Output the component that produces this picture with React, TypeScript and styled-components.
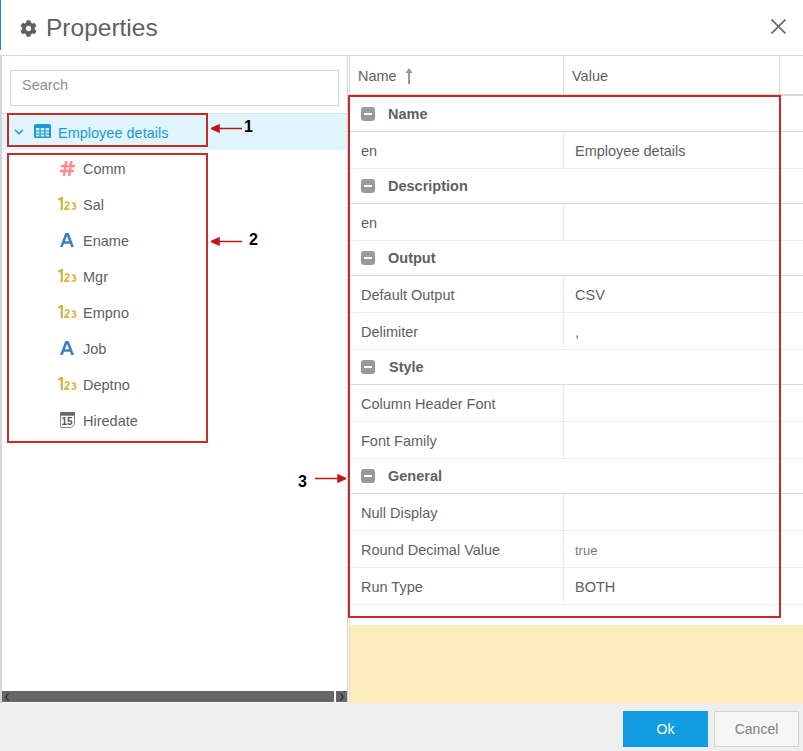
import { type FC } from 'react';
import styled, { createGlobalStyle } from 'styled-components';
import { FaCog } from 'react-icons/fa';

const FONT = '"Liberation Sans", Arial, sans-serif';

const Global = createGlobalStyle`
  html, body, #root { margin: 0; height: 100%; }
  body { background: #fff; font-family: ${FONT}; color: #555; overflow: hidden; }
  * { box-sizing: border-box; }
`;

const Dialog = styled.div`
  position: relative;
  width: 803px;
  height: 751px;
  display: flex;
  flex-direction: column;
  background: #fff;
`;

const Header = styled.header`
  position: relative;
  height: 56px;
  flex: none;
  display: flex;
  align-items: center;
  gap: 9px;
  padding: 1px 17px 0 20px;
  border-bottom: 1px solid #d9d9d9;

  &::before {
    content: '';
    position: absolute;
    left: 0;
    top: 0;
    width: 1px;
    height: 50px;
    background: #0e8cc8;
  }
`;

const Title = styled.h1`
  margin: 0;
  flex: 1;
  font-size: 24.5px;
  font-weight: 400;
  color: #5f5f5f;
`;

const CloseButton = styled.button`
  width: 15px;
  height: 15px;
  margin-top: -3px;
  padding: 0;
  border: 0;
  background: none;
  display: flex;
`;

const Body = styled.div`
  flex: 1;
  display: flex;
  min-height: 0;
`;

const LeftPane = styled.aside`
  width: 348px;
  margin-right: 1px;
  flex: none;
  display: flex;
  flex-direction: column;
  border-left: 2px solid #d4d4d4;
  border-right: 1px solid #d4d4d4;
`;

const SearchWrap = styled.div`
  padding: 14px 0 7px 8px;
`;

const SearchInput = styled.input`
  display: block;
  width: 329px;
  height: 36px;
  padding: 0 11px 7px;
  border: 1px solid #d5d5d5;
  font: 14.5px ${FONT};
  &::placeholder { color: #8f8f8f; opacity: 1; }
`;

const Tree = styled.div`
  flex: 1;
`;

const RootRow = styled.div`
  height: 37px;
  display: flex;
  align-items: center;
  padding-left: 12px;
  background: #e1f5fe;
  border-top: 1px solid #d5e3ea;
  color: #1b9ad6;
  font-size: 14.5px;
`;

const RootLabel = styled.span`
  margin-left: 7px;
  padding-top: 2px;
`;

const FieldRow = styled.div`
  height: 36px;
  display: flex;
  align-items: center;
  font-size: 14.5px;
  color: #5f5f5f;
`;

const FieldName = styled.span`
  padding-top: 2px;
`;

const FieldIcon = styled.span`
  width: 32px;
  height: 20px;
  margin-left: 49px;
  flex: none;
  display: flex;
  align-items: center;
  justify-content: center;
`;

const Scrollbar = styled.div`
  height: 11px;
  margin-bottom: 1px;
  display: flex;
  gap: 2px;
`;

const ScrollTrack = styled.div`
  flex: 1;
  display: flex;
  align-items: center;
  padding-left: 3px;
  background: #666;
`;

const ScrollEnd = styled.div`
  width: 11px;
  display: flex;
  align-items: center;
  justify-content: center;
  background: #666;
`;

const RightPane = styled.section`
  flex: 1;
  display: flex;
  flex-direction: column;
  border-left: 1px solid #dcdcdc;
`;

const TableHead = styled.div`
  height: 40px;
  flex: none;
  margin-bottom: 1px;
  display: flex;
  border-bottom: 2px solid #d9d9d9;
  font-size: 14.5px;
  color: #5f5f5f;
`;

const HeadCell = styled.div<{ $width: number }>`
  width: ${p => p.$width}px;
  display: flex;
  align-items: center;
  gap: 8px;
  padding: 1px 0 0 8px;
  border-right: 1px solid #d9d9d9;
`;

const GroupRow = styled.div`
  height: 35px;
  display: flex;
  align-items: center;
  padding-left: 11px;
  border-bottom: 1px solid #d9d9d9;
  font-size: 14.5px;
  font-weight: 700;
  color: #5f5f5f;
`;

const GroupLabel = styled.span<{ $offset: number }>`
  margin-left: ${p => p.$offset}px;
`;

const Minus = styled.span`
  width: 14px;
  height: 14px;
  flex: none;
  display: flex;
  align-items: center;
  justify-content: center;
  border-radius: 3px;
  background: #999;
  &::after {
    content: '';
    width: 8px;
    height: 2px;
    background: #fff;
  }
`;

const Row = styled.div`
  height: 37px;
  display: flex;
  border-bottom: 1px solid #ececec;
`;

const NameCell = styled.div`
  width: 213px;
  display: flex;
  align-items: center;
  padding: 2px 0 0 11px;
  font-size: 14.5px;
  color: #5f5f5f;
`;

const ValueCell = styled.div<{ $muted?: boolean }>`
  width: 216px;
  display: flex;
  align-items: center;
  padding: 2px 0 0 11px;
  border-left: 1px solid #ececec;
  font-size: ${p => (p.$muted ? '13px' : '14.5px')};
  color: ${p => (p.$muted ? '#7a7a7a' : '#5f5f5f')};
`;

const Notice = styled.div`
  flex: 1;
  margin-top: 20px;
  background: #feeebd;
`;

const Footer = styled.footer`
  height: 48px;
  flex: none;
  display: flex;
  justify-content: flex-end;
  align-items: flex-start;
  gap: 6px;
  padding: 8px 4px 0 0;
  background: #eee;
`;

const Button = styled.button<{ $primary?: boolean }>`
  width: 85px;
  height: 36px;
  font: 14px ${FONT};
  border: ${p => (p.$primary ? '0' : '1px solid #d2d2d2')};
  background: ${p => (p.$primary ? '#129de0' : '#f6f6f6')};
  color: ${p => (p.$primary ? '#fff' : '#808080')};
`;

/* red markup drawn over the screenshot */
const MarkBox = styled.div<{ $x: number; $y: number; $w: number; $h: number }>`
  position: absolute;
  left: ${p => p.$x}px;
  top: ${p => p.$y}px;
  width: ${p => p.$w}px;
  height: ${p => p.$h}px;
  border: 2px solid #c82a2a;
  pointer-events: none;
`;

const MarkArrow = styled.svg<{ $x: number; $y: number }>`
  position: absolute;
  left: ${p => p.$x}px;
  top: ${p => p.$y}px;
`;

const MarkNumber = styled.span<{ $x: number; $y: number }>`
  position: absolute;
  left: ${p => p.$x}px;
  top: ${p => p.$y}px;
  font: 700 16px/18px ${FONT};
  color: #000;
`;

const HashIcon = () => (
  <svg width="15" height="15" viewBox="0 0 15 15" fill="none" stroke="#ff8a8f" strokeWidth="2.400">
    <path d="M6.200 0 4 15M11.400 0 9.200 15M.8 5H15M0 10h14.200" />
  </svg>
);

const NumberIcon = () => (
  <svg width="19" height="14" viewBox="0 0 19 14" fill="none" stroke="#d4b43a">
    <path d="M.5 2.600 3.800 1V13" strokeWidth="2.300" />
    <path d="M7 6.200c.3-1.500 3.800-1.800 4 .2.1 1.700-3.200 3.500-4.100 5.700h4.600" strokeWidth="1.700" />
    <path d="M13.800 6.400c.8-.8 3.500-.7 3.500.9 0 1.100-1.100 1.400-2 1.500 1.100 0 2.400.4 2.400 1.600 0 1.900-3.100 2-4 1" strokeWidth="1.500" />
  </svg>
);

const TextIcon = () => (
  <svg width="14" height="14" viewBox="0 0 14 14" fill="#3d7fc1">
    <path d="M5.300 0h3.400L14 14h-2.800l-1.200-3.300H4L2.800 14H0zM4.900 8.200h4.200L7 3z" fillRule="evenodd" />
  </svg>
);

const DateIcon = () => (
  <svg width="15" height="16" viewBox="0 0 15 16">
    <path d="M.5 3h14v9.500L11.500 15.500H2A1.500 1.500 0 0 1 .5 14z" fill="#fff" stroke="#888" />
    <rect x="0" y="0" width="15" height="3.500" rx="1" fill="#666" />
    <text x="7" y="13" fontSize="10" fontWeight="700" textAnchor="middle" fontFamily="Liberation Sans" fill="#555">15</text>
  </svg>
);

const fields = [
  { name: 'Comm', icon: <HashIcon /> },
  { name: 'Sal', icon: <NumberIcon /> },
  { name: 'Ename', icon: <TextIcon /> },
  { name: 'Mgr', icon: <NumberIcon /> },
  { name: 'Empno', icon: <NumberIcon /> },
  { name: 'Job', icon: <TextIcon /> },
  { name: 'Deptno', icon: <NumberIcon /> },
  { name: 'Hiredate', icon: <DateIcon /> },
];

const groups = [
  { title: 'Name', offset: 13, rows: [['en', 'Employee details']] },
  { title: 'Description', offset: 13, rows: [['en', '']] },
  { title: 'Output', offset: 13, rows: [['Default Output', 'CSV'], ['Delimiter', ',']] },
  { title: 'Style', offset: 14, rows: [['Column Header Font', ''], ['Font Family', '']] },
  { title: 'General', offset: 13, rows: [['Null Display', ''], ['Round Decimal Value', 'true'], ['Run Type', 'BOTH']] },
];

const App: FC = () => {
  return (
    <Dialog>
      <Global />
      <Header>
        <FaCog size={17} color="#5f5f5f" />
        <Title>Properties</Title>
        <CloseButton aria-label="Close">
          <svg width="15" height="15" viewBox="0 0 15 15" stroke="#666" strokeWidth="1.600">
            <path d="M.5 .5l14 14M14.500 .5 .5 14.500" />
          </svg>
        </CloseButton>
      </Header>
      <Body>
        <LeftPane>
          <SearchWrap>
            <SearchInput placeholder="Search" />
          </SearchWrap>
          <Tree>
            <RootRow>
              <svg width="10" height="6" viewBox="0 0 10 6" fill="none" stroke="#1b9ad6" strokeWidth="1.500">
                <path d="M1 .8l4 4 4-4" />
              </svg>
              <svg width="17" height="14" viewBox="0 0 17 14" style={{ marginLeft: 10, marginBottom: 2 }}>
                <rect width="17" height="14" rx="1.500" fill="#1b9ad6" />
                <path
                  d="M2 4h3.500v2.500H2zM6.700 4h3.600v2.500H6.700zM11.500 4H15v2.500h-3.500zM2 7.500h3.500V9.500H2zM6.700 7.500h3.600V9.500H6.700zM11.500 7.500H15V9.500h-3.500zM2 10.500h3.500V12.500H2zM6.700 10.500h3.600V12.500H6.700zM11.500 10.500H15V12.500h-3.500z"
                  fill="#cdeefc"
                />
              </svg>
              <RootLabel>Employee details</RootLabel>
            </RootRow>
            {fields.map(f => (
              <FieldRow key={f.name}>
                <FieldIcon>{f.icon}</FieldIcon>
                <FieldName>{f.name}</FieldName>
              </FieldRow>
            ))}
          </Tree>
          <Scrollbar>
            <ScrollTrack>
              <svg width="4" height="8" viewBox="0 0 4 8" fill="none" stroke="#111">
                <path d="M3.500 .5.800 4l2.700 3.500" />
              </svg>
            </ScrollTrack>
            <ScrollEnd>
              <svg width="4" height="8" viewBox="0 0 4 8" fill="none" stroke="#111">
                <path d="M.5 .5 3.200 4 .5 7.500" />
              </svg>
            </ScrollEnd>
          </Scrollbar>
        </LeftPane>
        <RightPane>
          <TableHead>
            <HeadCell $width={214}>
              Name
              <svg width="8" height="16" viewBox="0 0 8 16" fill="#999">
                <path d="M4 0l3.500 5H5v11H3V5H.5z" />
              </svg>
            </HeadCell>
            <HeadCell $width={216}>Value</HeadCell>
          </TableHead>
          {groups.map(g => (
            <div key={g.title}>
              <GroupRow>
                <Minus />
                <GroupLabel $offset={g.offset}>{g.title}</GroupLabel>
              </GroupRow>
              {g.rows.map(([name, value]) => (
                <Row key={name}>
                  <NameCell>{name}</NameCell>
                  <ValueCell $muted={value === 'true'}>{value}</ValueCell>
                </Row>
              ))}
            </div>
          ))}
          <Notice />
        </RightPane>
      </Body>
      <Footer>
        <Button $primary>Ok</Button>
        <Button>Cancel</Button>
      </Footer>

      <MarkBox $x={7} $y={113} $w={201} $h={34} />
      <MarkBox $x={7} $y={153} $w={201} $h={290} />
      <MarkBox $x={348} $y={95} $w={433} $h={523} />
      <MarkArrow $x={211} $y={124} width="31" height="9" viewBox="0 0 31 9">
        <path d="M31 4.500H7M0 4.500 8 1v7z" stroke="#c01818" strokeWidth="1.500" fill="#c01818" />
      </MarkArrow>
      <MarkNumber $x={244} $y={118}>1</MarkNumber>
      <MarkArrow $x={211} $y={237} width="31" height="9" viewBox="0 0 31 9">
        <path d="M31 4.500H7M0 4.500 8 1v7z" stroke="#c01818" strokeWidth="1.500" fill="#c01818" />
      </MarkArrow>
      <MarkNumber $x={249} $y={231}>2</MarkNumber>
      <MarkArrow $x={315} $y={474} width="31" height="9" viewBox="0 0 31 9">
        <path d="M0 4.500H24M31 4.500 23 1v7z" stroke="#c01818" strokeWidth="1.500" fill="#c01818" />
      </MarkArrow>
      <MarkNumber $x={298} $y={473}>3</MarkNumber>
    </Dialog>
  );
};

export default App;
